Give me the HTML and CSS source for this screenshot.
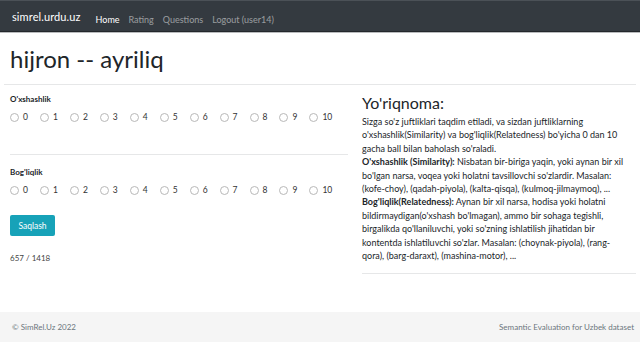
FILE: index.html
```html
<!DOCTYPE html>
<html lang="uz">
<head>
<meta charset="utf-8">
<title>simrel.urdu.uz</title>
<link rel="stylesheet" href="styles.css">
</head>
<body>
<nav class="navbar">
  <a class="brand" href="#">simrel.urdu.uz</a>
  <ul class="nav">
    <li><a class="nav-link active" href="#">Home</a></li>
    <li><a class="nav-link" href="#">Rating</a></li>
    <li><a class="nav-link" href="#">Questions</a></li>
    <li><a class="nav-link" href="#">Logout (user14)</a></li>
  </ul>
</nav>
<main class="page">
  <h1 class="title">hijron -- ayriliq</h1>
  <hr class="rule-top">
  <div class="columns">
    <form class="form">
      <div class="group">
        <div class="group-label">O'xshashlik</div>
        <div class="radios">
          <label class="radio"><span class="circle"></span>0</label>
          <label class="radio"><span class="circle"></span>1</label>
          <label class="radio"><span class="circle"></span>2</label>
          <label class="radio"><span class="circle"></span>3</label>
          <label class="radio"><span class="circle"></span>4</label>
          <label class="radio"><span class="circle"></span>5</label>
          <label class="radio"><span class="circle"></span>6</label>
          <label class="radio"><span class="circle"></span>7</label>
          <label class="radio"><span class="circle"></span>8</label>
          <label class="radio"><span class="circle"></span>9</label>
          <label class="radio"><span class="circle"></span>10</label>
        </div>
      </div>
      <hr class="rule-mid">
      <div class="group">
        <div class="group-label">Bog'liqlik</div>
        <div class="radios">
          <label class="radio"><span class="circle"></span>0</label>
          <label class="radio"><span class="circle"></span>1</label>
          <label class="radio"><span class="circle"></span>2</label>
          <label class="radio"><span class="circle"></span>3</label>
          <label class="radio"><span class="circle"></span>4</label>
          <label class="radio"><span class="circle"></span>5</label>
          <label class="radio"><span class="circle"></span>6</label>
          <label class="radio"><span class="circle"></span>7</label>
          <label class="radio"><span class="circle"></span>8</label>
          <label class="radio"><span class="circle"></span>9</label>
          <label class="radio"><span class="circle"></span>10</label>
        </div>
      </div>
      <button class="btn" type="button">Saqlash</button>
      <div class="counter">657 / 1418</div>
    </form>
    <aside class="guide">
      <h2 class="guide-title">Yo'riqnoma:</h2>
      <p class="guide-text">Sizga so'z juftliklari taqdim etiladi, va sizdan juftliklarning<br>o'xshashlik(Similarity) va bog'liqlik(Relatedness) bo'yicha 0 dan 10<br>gacha ball bilan baholash so'raladi.<br><b>O'xshashlik (Similarity):</b> Nisbatan bir-biriga yaqin, yoki aynan bir xil<br>bo'lgan narsa, voqea yoki holatni tavsillovchi so'zlardir. Masalan:<br>(kofe-choy), (qadah-piyola), (kalta-qisqa), (kulmoq-jilmaymoq), ...<br><b>Bog'liqlik(Relatedness):</b> Aynan bir xil narsa, hodisa yoki holatni<br>bildirmaydigan(o'xshash bo'lmagan), ammo bir sohaga tegishli,<br>birgalikda qo'llaniluvchi, yoki so'zning ishlatilish jihatidan bir<br>kontentda ishlatiluvchi so'zlar. Masalan: (choynak-piyola), (rang-<br>qora), (barg-daraxt), (mashina-motor), ...</p>
      <hr class="rule-guide">
    </aside>
  </div>
</main>
<footer class="footer">
  <span>© SimRel.Uz 2022</span>
  <span>Semantic Evaluation for Uzbek dataset</span>
</footer>
</body>
</html>
```
FILE: styles.css
```css
* { box-sizing: border-box; }
html, body { margin: 0; padding: 0; }
body {
  font-family: Lato, "Open Sans", sans-serif;
  color: #212529;
  background: #fff;
  width: 640px;
  height: 342px;
  overflow: hidden;
  display: flex;
  flex-direction: column;
}
a { text-decoration: none; }

.navbar {
  height: 32px;
  background: #343a40;
  border-top: 1px solid #4b5157;
  border-bottom: 1px solid #23272b;
  box-shadow: 0 1px 0 #b9bbbd;
  display: flex;
  align-items: center;
  padding: 0 12px;
  flex: none;
}
.brand {
  color: #fff;
  font-size: 11px;
  margin-right: 15px;
  letter-spacing: 0.1px;
}
.nav {
  list-style: none;
  margin: 0;
  padding: 0;
  display: flex;
  gap: 9px;
}
.nav-link {
  color: rgba(255,255,255,0.5);
  font-size: 9px;
}
.nav-link.active { color: #fff; }

.page {
  flex: 1;
  padding: 0 4px;
}
.title {
  margin: 0;
  padding: 11px 0 0 6px;
  font-size: 24px;
  font-weight: 400;
  line-height: 32px;
  height: 52px;
}
.rule-top {
  margin: 0;
  border: 0;
  border-top: 1px solid #e6e7e8;
}
.columns {
  display: flex;
  padding: 0 0 0 6px;
  gap: 14px;
}
.form {
  width: 338px;
  padding-top: 9px;
}
.group-label {
  font-size: 8px;
  font-weight: 700;
  line-height: 11px;
}
.radios {
  display: flex;
  margin-top: 6px;
  height: 12px;
  align-items: center;
}
.radio {
  display: flex;
  align-items: center;
  font-size: 8.5px;
  color: #333;
  margin-right: 12px;
}
.circle {
  width: 9px;
  height: 9px;
  border: 1px solid #b8b8b8;
  border-radius: 50%;
  margin-right: 4px;
  background: #fff;
}
.rule-mid {
  margin: 31px 0 12px 0;
  border: 0;
  border-top: 1px solid #e6e7e8;
}
.btn {
  margin-top: 19px;
  display: block;
  width: 45px;
  height: 21px;
  padding: 0;
  background: #17a2b8;
  color: #fff;
  border: 0;
  border-radius: 2px;
  font-family: inherit;
  font-size: 8.5px;
}
.counter {
  margin-top: 17px;
  font-size: 8px;
  color: #444;
}
.guide {
  width: 274px;
  padding-top: 8px;
}
.guide-title {
  margin: 0;
  font-size: 16px;
  font-weight: 400;
  line-height: 20px;
}
.guide-text {
  margin: 2px 0 0 0;
  font-size: 9px;
  line-height: 13.4px;
  white-space: nowrap;
}
.guide-text b { font-weight: 700; }
.rule-guide {
  margin: 11px 0 0 0;
  border: 0;
  border-top: 1px solid #e6e7e8;
}

.footer {
  flex: none;
  height: 30px;
  background: #f5f5f5;
  display: flex;
  justify-content: space-between;
  align-items: center;
  padding: 0 6px 0 12px;
  font-size: 8px;
  color: #6c757d;
}
```
